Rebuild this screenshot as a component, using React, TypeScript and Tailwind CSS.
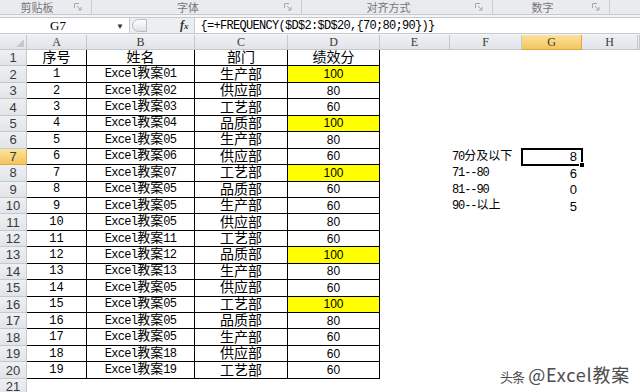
import React from "react";

type Row = [number, string, string, number];

const data: Row[] = [
  [1, "Excel教案01", "生产部", 100],
  [2, "Excel教案02", "供应部", 80],
  [3, "Excel教案03", "工艺部", 60],
  [4, "Excel教案04", "品质部", 100],
  [5, "Excel教案05", "生产部", 80],
  [6, "Excel教案06", "供应部", 60],
  [7, "Excel教案07", "工艺部", 100],
  [8, "Excel教案05", "品质部", 60],
  [9, "Excel教案05", "生产部", 60],
  [10, "Excel教案05", "供应部", 80],
  [11, "Excel教案11", "工艺部", 60],
  [12, "Excel教案12", "品质部", 100],
  [13, "Excel教案13", "生产部", 80],
  [14, "Excel教案05", "供应部", 60],
  [15, "Excel教案05", "工艺部", 100],
  [16, "Excel教案05", "品质部", 80],
  [17, "Excel教案05", "生产部", 60],
  [18, "Excel教案18", "供应部", 60],
  [19, "Excel教案19", "工艺部", 60],
];

const stats: Record<number, [string, number]> = {
  7: ["70分及以下", 8],
  8: ["71--80", 6],
  9: ["81--90", 0],
  10: ["90--以上", 5],
};

const cols = ["A", "B", "C", "D", "E", "F", "G", "H", ""];

const han = /([\u3400-\u9fff]+)/;

// SimSun style: latin glyphs are half the width of the han ones
function Mixed({ text, latin, cjk }: { text: string; latin: string; cjk: string }) {
  return (
    <span className="whitespace-nowrap leading-[13px]">
      {text
        .split(han)
        .filter(Boolean)
        .map((part, i) =>
          han.test(part) ? (
            <span key={i} className={cjk}>
              {part}
            </span>
          ) : (
            <span key={i} className={latin}>
              {part}
            </span>
          )
        )}
    </span>
  );
}

function Launcher() {
  return (
    <svg width="8" height="8" viewBox="0 0 8 8" className="shrink-0">
      <path d="M0.5 5V0.5H5" stroke="#a3a8ae" fill="none" />
      <path d="M3 3L7 7M7 4V7H4" stroke="#a3a8ae" fill="none" />
    </svg>
  );
}

const groups = [
  { label: "剪贴板", w: "w-[92px]" },
  { label: "字体", w: "w-[210px]" },
  { label: "对齐方式", w: "w-[191px]" },
  { label: "数字", w: "w-[117px]" },
];

const headCell =
  "flex items-center justify-center border-r border-b border-[#c3c8ce] bg-linear-to-b from-[#eef0f3] to-[#e1e4e9] text-[#3a3a3a]";
const headActive =
  "flex items-center justify-center border-r border-b border-[#e2a942] bg-linear-to-b from-[#fbe39a] to-[#f3c55e] text-[#3a3a3a]";
const tableCell = "flex items-center justify-center border-r border-b border-black";

const cjkFont = "font-['Noto_Sans_CJK_SC',sans-serif]";

export default function App() {
  const cellText = `${cjkFont} text-[14px] leading-[13px] pb-[2px]`;
  return (
    <div className="relative w-[640px] h-[392px] overflow-hidden bg-white">
      {/* ribbon group labels */}
      <div className="flex h-[15px] bg-[#e9ebee] border-b border-[#c7cbd0]">
        {groups.map((g) => (
          <div key={g.label} className={`${g.w} flex items-center border-r border-[#c9cdd2] pr-[9px]`}>
            <span className={`flex-1 text-center ${cjkFont} text-[11px] leading-[12px] text-[#767676]`}>
              {g.label}
            </span>
            <Launcher />
          </div>
        ))}
        <div className="flex-1" />
      </div>
      <div className="h-[2px] bg-[#f4f5f7]" />

      {/* formula bar */}
      <div className="flex h-[17px] border-y border-[#c5c9ce] bg-[#eceef1]">
        <div className="flex w-[130px] items-center bg-white border-r border-[#c5c9ce]">
          <span className="w-[116px] text-center font-['Liberation_Serif',serif] text-[13px] leading-[13px]">G7</span>
          <span className="text-[8px] leading-[8px] text-[#333]">▼</span>
        </div>
        <div className="flex items-center pl-[2px]">
          <div className="h-[13px] w-[15px] rounded-l-full border border-[#b7bcc2] bg-linear-to-b from-[#ffffff] to-[#dfe2e6]" />
        </div>
        <div className="flex flex-1 items-center">
          <div className="w-[33px]" />
          <span className="font-['Liberation_Serif',serif] italic font-bold text-[12px] leading-[12px] text-[#333]">
            f<span className="text-[9px]">x</span>
          </span>
          <div className="ml-[5px] h-full w-px bg-[#c5c9ce]" />
          <div className="flex h-full flex-1 items-center bg-white pl-[6px] font-['Liberation_Mono',monospace] text-[12px] leading-[12px] tracking-[-0.7px] text-black">
            {"{=+FREQUENCY($D$2:$D$20,{70;80;90})}"}
          </div>
        </div>
      </div>
      <div className="h-px bg-[#f4f5f7]" />

      {/* sheet */}
      <div className="grid grid-cols-[27px_60px_108px_93px_92px_70px_72px_60px_56px_1fr] grid-rows-[15px_repeat(21,16.45px)]">
        <div className={`${headCell} relative`}>
          <svg width="8" height="8" viewBox="0 0 8 8" className="absolute bottom-[2px] right-[2px]">
            <path d="M8 0V8H0Z" fill="#c4c8ce" />
          </svg>
        </div>
        {cols.map((c, i) => (
          <div
            key={i}
            className={`${c === "G" ? headActive : headCell} font-['Liberation_Serif',serif] text-[12px] leading-[12px]`}
          >
            {c}
          </div>
        ))}

        {Array.from({ length: 21 }, (_, k) => {
          const r = k + 1;
          const d = r >= 2 && r <= 20 ? data[r - 2] : null;
          const s = stats[r];
          const inTable = r <= 20;
          return (
            <React.Fragment key={r}>
              <div
                className={`${r === 7 ? headActive : headCell} font-['Liberation_Sans',sans-serif] text-[13px] leading-[13px]`}
              >
                {r}
              </div>
              {inTable ? (
                <>
                  <div className={`${tableCell} ${r === 1 ? cellText : "font-['Liberation_Mono',monospace] text-[12px] leading-[12px]"}`}>
                    {r === 1 ? "序号" : d![0]}
                  </div>
                  <div className={`${tableCell} pb-[2px]`}>
                    {r === 1 ? (
                      <span className={`${cjkFont} text-[14px] leading-[13px]`}>姓名</span>
                    ) : (
                      <Mixed
                        text={d![1]}
                        latin="font-['Liberation_Mono',monospace] text-[12px] tracking-[-0.7px]"
                        cjk={`${cjkFont} text-[13px]`}
                      />
                    )}
                  </div>
                  <div className={`${tableCell} ${cellText}`}>{r === 1 ? "部门" : d![2]}</div>
                  <div
                    className={`${tableCell} ${
                      r === 1 ? cellText : "font-['Liberation_Sans',sans-serif] text-[12px] leading-[12px]"
                    } ${d && d[3] === 100 ? "bg-[#ffff00]" : ""}`}
                  >
                    {r === 1 ? "绩效分" : d![3]}
                  </div>
                </>
              ) : (
                <>
                  <div />
                  <div />
                  <div />
                  <div />
                </>
              )}
              <div />
              <div className="flex items-center pl-[2px] pb-[2px]">
                {s && (
                  <Mixed
                    text={s[0]}
                    latin="font-['Liberation_Mono',monospace] text-[12px] tracking-[-1.1px]"
                    cjk={`${cjkFont} text-[12px]`}
                  />
                )}
              </div>
              <div className="relative flex items-center justify-end pr-[5px] font-['Liberation_Sans',sans-serif] text-[13px] leading-[13px]">
                {s && s[1]}
                {r === 7 && (
                  <>
                    <div className="absolute -inset-[1px] border-2 border-black" />
                    <div className="absolute -bottom-[3px] -right-[3px] size-[6px] bg-black border border-white" />
                  </>
                )}
              </div>
              <div />
              <div />
            </React.Fragment>
          );
        })}
      </div>

      {/* watermark */}
      <div className="absolute bottom-[6px] right-[10px] flex items-baseline gap-[4px] text-[#4d4d4d] [text-shadow:0_0_2px_#fff,0_0_2px_#fff,0_0_1px_#fff]">
        <span className={`${cjkFont} text-[13px] leading-[18px] tracking-[-1px]`}>头条</span>
        <span className={`${cjkFont} text-[18px] leading-[18px] tracking-[0.8px]`}>@Excel教案</span>
      </div>
    </div>
  );
}
